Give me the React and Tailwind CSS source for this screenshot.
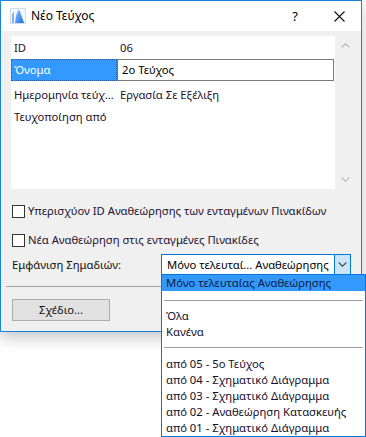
import { useState } from "react";

const Chevron = ({ up, className }) => (
  <svg width="9" height="6" viewBox="0 0 9 6" className={className}>
    {up ? (
      <path d="M0 5.5 L4.5 1 L9 5.5 L7.5 5.5 L4.5 2.5 L1.5 5.5 Z" fill="currentColor" />
    ) : (
      <path d="M0 0.5 L4.5 5 L9 0.5 L7.5 0.5 L4.5 3.5 L1.5 0.5 Z" fill="currentColor" />
    )}
  </svg>
);

const AppIcon = () => (
  <svg width="16" height="16" viewBox="0 0 16 16">
    <defs>
      <linearGradient id="sail" x1="0" y1="0" x2="1" y2="1">
        <stop offset="0" stopColor="#8fc4ff" />
        <stop offset="1" stopColor="#1a6fe8" />
      </linearGradient>
    </defs>
    <rect x="0.5" y="0.5" width="15" height="15" fill="#f4f8fd" stroke="#d6dce4" />
    <path d="M2 15 L2 7 L4 3 L4 15 Z" fill="#7fb2ee" />
    <path d="M5 15 Q6 5 9 1.5 Q11 6 14 15 Z" fill="url(#sail)" />
  </svg>
);

const Checkbox = ({ label, checked, onChange }) => (
  <label className="flex items-center h-[14px] cursor-default">
    <span
      onClick={onChange}
      className="w-[13px] h-[13px] border border-[#333333] bg-white flex items-center justify-center"
    >
      {checked && <span className="text-[10px] leading-none">✓</span>}
    </span>
    <span className="ml-[3px] text-[#1c1030] whitespace-nowrap">{label}</span>
  </label>
);

const rows = [
  { k: "ID", v: "06" },
  { k: "Όνομα", v: "2ο Τεύχος", sel: true },
  { k: "Ημερομηνία τεύχ...", v: "Εργασία Σε Εξέλιξη", gap: true },
  { k: "Τευχοποίηση από", v: "" },
];

const options = [
  "από 05 - 5ο Τεύχος",
  "από 04 - Σχηματικό Διάγραμμα",
  "από 03 - Σχηματικό Διάγραμμα",
  "από 02 - Αναθεώρηση Κατασκευής",
  "από 01 - Σχηματικό Διάγραμμα",
];

export default function App() {
  const [c1, setC1] = useState(false);
  const [c2, setC2] = useState(false);

  return (
    <div
      className="relative w-[366px] h-[437px] bg-white overflow-hidden text-[11.25px] leading-none text-[#111] whitespace-nowrap"
      style={{ fontFamily: '"Noto Sans", "DejaVu Sans", sans-serif' }}
    >
      {/* dialog */}
      <div className="w-[362px] h-[332px] border border-[#1883d7] bg-[#f0f0f0] flex flex-col shadow-[0_6px_14px_rgba(0,0,0,0.22)]">
        {/* title bar */}
        <div className="h-[30px] bg-white flex items-center shrink-0">
          <div className="ml-[9px]">
            <AppIcon />
          </div>
          <span className="ml-[5px] text-[12px] text-black">Νέο Τεύχος</span>
          <span className="ml-auto text-[13px] text-black mr-[36px]">?</span>
          <svg width="11" height="11" viewBox="0 0 11 11" className="mr-[16px]">
            <path d="M0.5 0.5 L10.5 10.5 M10.5 0.5 L0.5 10.5" stroke="#111" strokeWidth="1.1" />
          </svg>
        </div>

        {/* list */}
        <div className="flex mt-[5px] ml-[10px]">
          <div className="w-[324px] h-[153px] bg-white pt-px">
            {rows.map((r) => (
              <div key={r.k} className={`flex h-[22px] items-center ${r.gap ? "mt-[3px]" : ""}`}>
                <div
                  className={`w-[106px] h-full flex items-center ${
                    r.sel ? "bg-[#3399ff] text-white border border-dotted border-[#1c5fa8] pl-[2px]" : "text-[#1c1030] pl-[3px]"
                  }`}
                >
                  {r.k}
                </div>
                {r.sel ? (
                  <div className="w-[217px] h-full border border-[#7a7a7a] flex items-center pl-[4px] text-black">
                    {r.v}
                  </div>
                ) : (
                  <div className="pl-[3px] text-[#1c1030]">{r.v}</div>
                )}
              </div>
            ))}
          </div>
          <div className="w-[20px] h-[153px] flex flex-col items-center justify-between py-[6px] text-[#b4b4b4]">
            <Chevron up />
            <Chevron />
          </div>
        </div>

        {/* checkboxes */}
        <div className="ml-[11px] mt-[15px]">
          <Checkbox label="Υπερισχύον ID Αναθεώρησης των ενταγμένων Πινακίδων" checked={c1} onChange={() => setC1(!c1)} />
        </div>
        <div className="ml-[11px] mt-[15px]">
          <Checkbox label="Νέα Αναθεώρηση στις ενταγμένες Πινακίδες" checked={c2} onChange={() => setC2(!c2)} />
        </div>

        {/* combo row */}
        <div className="flex items-center mt-[7px] ml-[11px]">
          <span className="w-[149px] text-[#111]">Εμφάνιση Σημαδιών:</span>
          <div className="w-[190px] h-[21px] border border-[#0078d7] bg-white flex">
            <span className="flex-1 flex items-center pl-[5px] text-black">Μόνο τελευταί... Αναθεώρησης</span>
            <span className="w-[16px] bg-[#cce4f7] border-l border-[#0078d7] flex items-center justify-center text-[#333]">
              <Chevron />
            </span>
          </div>
        </div>

        <div className="mt-[11px] mx-[5px] h-px bg-[#a0a0a0]" />

        <div className="ml-[11px] mt-[12px]">
          <button className="w-[98px] h-[22px] bg-[#e1e1e1] border border-[#adadad] text-[#111]">Σχέδιο...</button>
        </div>
      </div>

      {/* open dropdown */}
      <div className="absolute left-[161px] top-[274px] w-[205px] h-[163px] border border-[#0078d7] bg-white text-[#150e2a]">
        <div className="h-[16px] bg-[#3399ff] flex items-center pl-[4px] text-[#0d1b3a]">Μόνο τελευταίας Αναθεώρησης</div>
        <div className="h-[9px]" />
        <div className="h-px mx-[2px] bg-[#a0a0a0]" />
        <div className="h-[7px]" />
        <div className="h-[16px] flex items-center pl-[4px]">Όλα</div>
        <div className="h-[16px] flex items-center pl-[4px]">Κανένα</div>
        <div className="h-[7px]" />
        <div className="h-px mx-[2px] bg-[#a0a0a0]" />
        <div className="h-[8px]" />
        {options.map((o, i) => (
          <div key={i} className="h-[16px] flex items-center pl-[4px]">{o}</div>
        ))}
      </div>
    </div>
  );
}
